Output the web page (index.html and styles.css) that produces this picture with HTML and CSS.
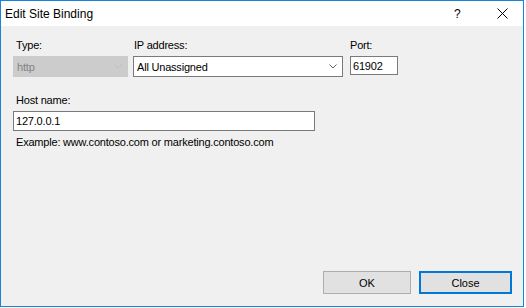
FILE: index.html
```html
<!DOCTYPE html>
<html lang="en">
<head>
    <meta charset="UTF-8">
    <title>Edit Site Binding</title>
    <link rel="stylesheet" href="styles.css">
</head>
<body>
<div class="window">
    <div class="title-bar">
        <span class="title">Edit Site Binding</span>
        <span class="title-help">?</span>
        <span class="title-close">
            <svg width="11" height="11" viewBox="0 0 11 11">
                <path d="M0.5 0.5 L10.5 10.5 M10.5 0.5 L0.5 10.5" stroke="#000" stroke-width="1" fill="none"/>
            </svg>
        </span>
    </div>
    <div class="content">
        <div class="row">
            <div class="field field-type">
                <label>Type:</label>
                <div class="combo combo-disabled">
                    <span>http</span>
                    <svg class="chevron" width="8" height="5" viewBox="0 0 8 5">
                        <path d="M0.5 0.5 L4 4 L7.5 0.5" stroke="#bfbfbf" fill="none"/>
                    </svg>
                </div>
            </div>
            <div class="field field-ip">
                <label>IP address:</label>
                <div class="combo">
                    <span>All Unassigned</span>
                    <svg class="chevron" width="8" height="5" viewBox="0 0 8 5">
                        <path d="M0.5 0.5 L4 4 L7.5 0.5" stroke="#606060" fill="none"/>
                    </svg>
                </div>
            </div>
            <div class="field field-port">
                <label>Port:</label>
                <div class="textbox">61902</div>
            </div>
        </div>
        <div class="field field-host">
            <label>Host name:</label>
            <div class="textbox">127.0.0.1</div>
            <p class="hint">Example: www.contoso.com or marketing.contoso.com</p>
        </div>
        <div class="buttons">
            <button class="btn">OK</button>
            <button class="btn btn-default">Close</button>
        </div>
    </div>
</div>
</body>
</html>
```

FILE: styles.css
```css
/* 页面 */
body {
    margin: 0;
    background-color: #fff;
    font-family: "Liberation Sans", Arial, sans-serif;
    font-size: 11px;
    letter-spacing: -0.2px;
    color: #000;
}

/* 对话框窗口 */
.window {
    width: 522px;
    height: 305px;
    border: 1px solid #1883d7;
    display: flex;
    flex-direction: column;
}

/* 标题栏 */
.title-bar {
    height: 25px;
    background-color: #fff;
    display: flex;
    align-items: center;
}

.title {
    font-size: 12px;
    letter-spacing: 0;
    margin-left: 4px;
    flex: 1;
}

.title-help {
    font-size: 12px;
    width: 10px;
    margin-right: 33px;
}

.title-close {
    display: flex;
    margin-right: 15px;
}

/* 内容区域 */
.content {
    flex: 1;
    background-color: #f0f0f0;
    padding: 13px 12px 0 12px;
    display: flex;
    flex-direction: column;
}

.row {
    display: flex;
}

.field {
    display: flex;
    flex-direction: column;
}

.field label {
    line-height: 13px;
    margin-left: 3px;
    margin-bottom: 4px;
}

.field-type {
    width: 115px;
    margin-right: 5px;
}

.field-ip {
    width: 210px;
    margin-right: 7px;
}

.field-ip label {
    margin-left: 1px;
}

.field-port {
    width: 48px;
}

.field-port label {
    margin-left: 0;
}

.field-host {
    margin-top: 17px;
    width: 302px;
}

/* 下拉框 */
.combo {
    height: 21px;
    box-sizing: border-box;
    border: 1px solid #7a7a7a;
    background-color: #fff;
    display: flex;
    align-items: center;
    justify-content: space-between;
    padding: 0 5px 0 3px;
}

.combo-disabled {
    background-color: #cccccc;
    border-color: #cccccc;
    color: #838383;
}

.chevron {
    display: block;
}

/* 文本框 */
.textbox {
    height: 20px;
    box-sizing: border-box;
    border: 1px solid #7a7a7a;
    background-color: #fff;
    display: flex;
    align-items: center;
    padding: 0 2px;
}

.field-port .textbox {
    height: 19px;
}

.hint {
    margin: 5px 0 0 3px;
    line-height: 13px;
}

/* 按钮 */
.buttons {
    margin-top: auto;
    margin-bottom: 12px;
    display: flex;
    justify-content: flex-end;
    margin-right: -1px;
}

.btn {
    font-family: inherit;
    font-size: 11px;
    letter-spacing: 0;
    width: 88px;
    height: 23px;
    background-color: #e1e1e1;
    border: 1px solid #adadad;
    padding: 0;
    margin-left: 8px;
    color: #000;
}

.btn-default {
    width: 93px;
    border: 2px solid #0078d7;
}
```
